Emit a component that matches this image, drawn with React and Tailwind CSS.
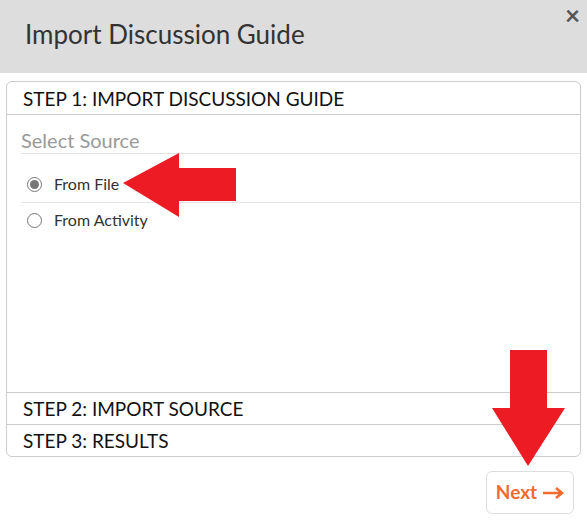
import React from 'react';

const Step = ({ label, className = '' }) => (
    <div className={`h-[32px] flex items-center px-[16px] pt-[2px] text-[19px] text-[#111] ${className}`}>
        {label}
    </div>
);

const Radio = ({ checked, label }) => (
    <label className="flex items-center gap-[12px] pl-[6px] text-[16px] text-[#333]">
        <span className="w-[15px] h-[15px] rounded-full border border-[#777] bg-white flex items-center justify-center">
            {checked && <span className="w-[9px] h-[9px] rounded-full bg-[#777]" />}
        </span>
        {label}
    </label>
);

export default function App() {
    return (
        <div className="relative w-[587px] h-[521px] bg-white overflow-hidden" style={{ fontFamily: 'Lato, "Open Sans", sans-serif' }}>
            {/* Header */}
            <div className="relative h-[73px] bg-[#dddddd] flex items-center pl-[25px]">
                <h1 className="text-[26px] text-[#333] -mt-[4px]">Import Discussion Guide</h1>
                <button className="absolute top-[2px] right-[7px] h-[26px] text-[26px] font-bold text-[#555] leading-[26px]">×</button>
            </div>

            {/* Wizard panel */}
            <div className="mx-[6px] mt-[8px] h-[376px] border border-[#cccccc] rounded-[6px] flex flex-col">
                <Step label="STEP 1: IMPORT DISCUSSION GUIDE" className="h-[33px] pt-0 border-b border-[#cccccc]" />
                <div className="flex-1 pl-[14px]">
                    <div className="h-[39px] flex items-end pb-[3px] leading-none text-[20px] text-[#999] border-b border-[#e3e3e3]">
                        Select Source
                    </div>
                    <div className="h-[49px] flex items-center pt-[12px] border-b border-[#e3e3e3]">
                        <Radio checked label="From File" />
                    </div>
                    <div className="h-[34px] flex items-center">
                        <Radio label="From Activity" />
                    </div>
                </div>
                <Step label="STEP 2: IMPORT SOURCE" className="border-t border-[#cccccc]" />
                <Step label="STEP 3: RESULTS" className="border-t border-[#cccccc]" />
            </div>

            {/* Footer */}
            <div className="flex justify-end pr-[13px] pt-[14px]">
                <button className="w-[88px] h-[43px] border border-[#dddddd] rounded-[6px] flex items-center justify-center gap-[6px] text-[19px] font-bold text-[#f26a2e]">
                    Next
                    <svg width="21" height="12" viewBox="0 0 21 12">
                        <path d="M0 6H18M13 1L19 6L13 11" fill="none" stroke="#f26a2e" strokeWidth="2.6" />
                    </svg>
                </button>
            </div>

            {/* Annotation arrows */}
            <svg className="absolute inset-0 pointer-events-none" width="587" height="521">
                <polygon points="123,183 179,153 179,168 236,168 236,201 179,201 179,217" fill="#ed1c24" />
                <polygon points="510,350 547,350 547,408 565,408 528,466 492,408 510,408" fill="#ed1c24" />
            </svg>
        </div>
    );
}
